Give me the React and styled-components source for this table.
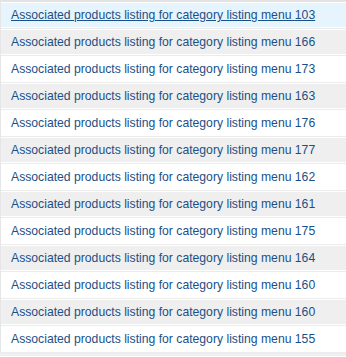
import styled, { createGlobalStyle } from "styled-components";

const GlobalStyle = createGlobalStyle`
  html, body {
    margin: 0;
    padding: 0;
    background: #fff;
  }
  body {
    font-family: "Liberation Sans", Arial, Helvetica, sans-serif;
  }
`;

const menus = [103, 166, 173, 163, 176, 177, 162, 161, 175, 164, 160, 160, 155];

export default function App() {
  return (
    <>
      <GlobalStyle />
      <List>
        {menus.map((n, i) => (
          <Item key={i}>
            <Link href="#" $striped={i % 2 === 1} $hover={i === 0}>
              Associated products listing for category listing menu {n}
            </Link>
          </Item>
        ))}
      </List>
    </>
  );
}

const List = styled.ul`
  list-style: none;
  margin: 0;
  padding: 0;
  width: 346px;
  border-top: 2px solid #e3e3e3;
  border-bottom: 3px solid #efefef;
`;

const Item = styled.li`
  padding: 1px 0;
  border-bottom: 1px solid #ebebeb;
  border-left: 1px solid #e6e6e6;
`;

const Link = styled.a`
  display: flex;
  align-items: center;
  height: 24px;
  padding: 0 10px;
  font-size: 12.2px;
  color: #1b4f87;
  text-decoration: ${(p) => (p.$hover ? "underline" : "none")};
  background: ${(p) =>
    p.$hover ? "#e6f5fd" : p.$striped ? "#efefef" : "#ffffff"};
  white-space: nowrap;
`;
